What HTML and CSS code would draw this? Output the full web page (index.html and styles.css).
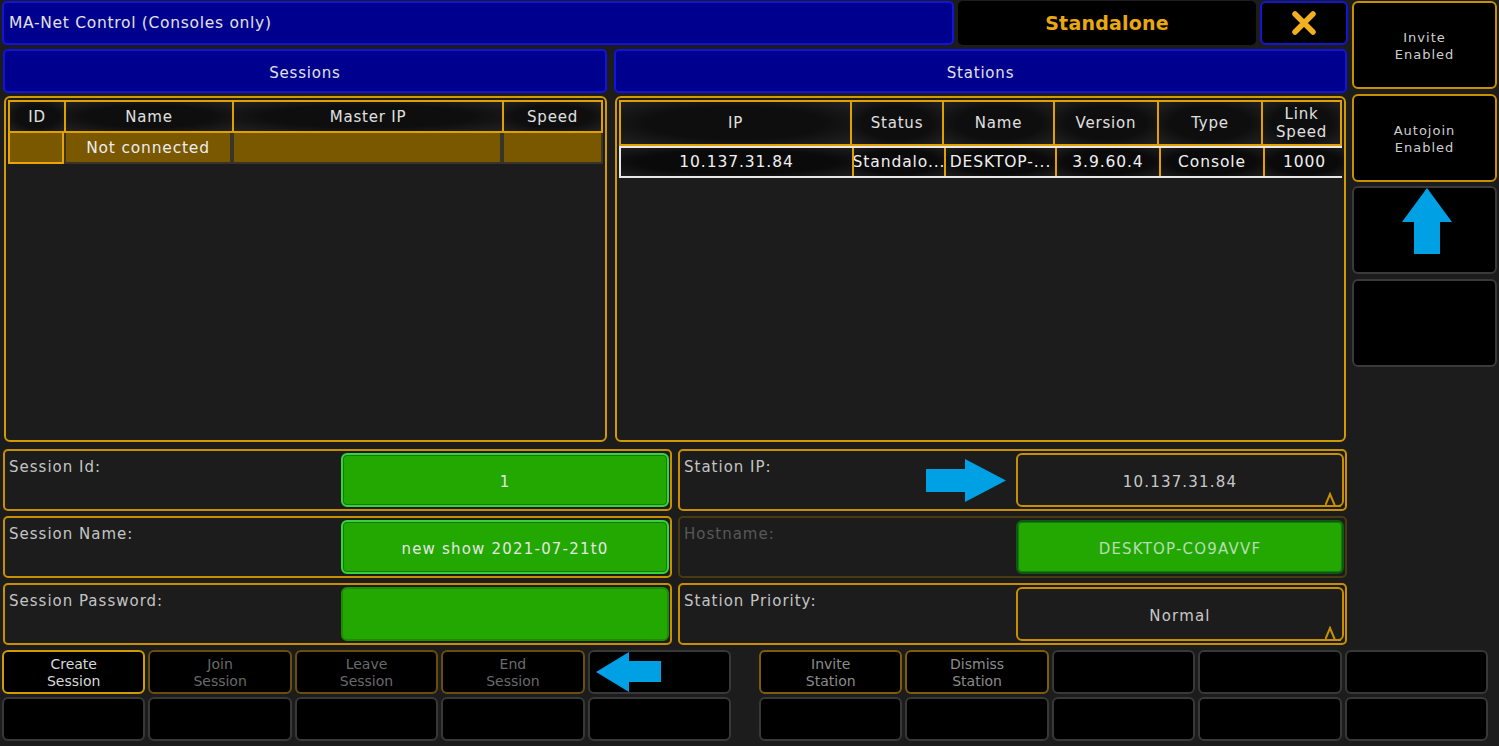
FILE: index.html
```html
<!DOCTYPE html>
<html>
<head>
<meta charset="utf-8">
<link rel="stylesheet" href="styles.css">
</head>
<body>
<div class="screen">
  <div class="upper">
    <div class="main">
      <div class="topbar">
        <div class="title">MA-Net Control (Consoles only)</div>
        <div class="mode">Standalone</div>
        <div class="close">
          <svg width="26" height="26" viewBox="0 0 26 26"><path d="M4 4 L22 22 M22 4 L4 22" stroke="#f0b020" stroke-width="5.5" stroke-linecap="round" fill="none"/></svg>
        </div>
      </div>
      <div class="heads">
        <div class="head head-sess">Sessions</div>
        <div class="head head-stat">Stations</div>
      </div>
      <div class="panels">
        <div class="panel panel-sess">
          <div class="thead sess-cols">
            <div class="th">ID</div>
            <div class="th">Name</div>
            <div class="th">Master IP</div>
            <div class="th">Speed</div>
          </div>
          <div class="srow sess-cols">
            <div class="sc sc-sel"></div>
            <div class="sc">Not connected</div>
            <div class="sc"></div>
            <div class="sc"></div>
          </div>
        </div>
        <div class="panel panel-stat">
          <div class="thead stat-cols thead-tall">
            <div class="th">IP</div>
            <div class="th">Status</div>
            <div class="th">Name</div>
            <div class="th">Version</div>
            <div class="th">Type</div>
            <div class="th">Link<br>Speed</div>
          </div>
          <div class="trow stat-cols">
            <div class="tc">10.137.31.84</div>
            <div class="tc">Standalo...</div>
            <div class="tc">DESKTOP-...</div>
            <div class="tc">3.9.60.4</div>
            <div class="tc">Console</div>
            <div class="tc">1000</div>
          </div>
        </div>
      </div>
      <div class="fields">
        <div class="field">
          <div class="label">Session Id:</div>
          <div class="input green">1</div>
        </div>
        <div class="field field-arrow">
          <div class="label">Station IP:</div>
          <svg class="arrow-right" width="80" height="43" viewBox="0 0 80 43"><polygon points="0,10 39,10 39,0 80,21.5 39,43 39,33 0,33" fill="#00a0e4"/></svg>
          <div class="input dark">10.137.31.84
            <svg class="caret" width="16" height="15" viewBox="0 0 16 15"><polyline points="0,14 5,2 10,14 16,14" stroke="#c89000" stroke-width="2" fill="none"/></svg>
          </div>
        </div>
        <div class="field">
          <div class="label">Session Name:</div>
          <div class="input green">new show 2021-07-21t0</div>
        </div>
        <div class="field field-dim">
          <div class="label label-dim">Hostname:</div>
          <div class="input green green-dim">DESKTOP-CO9AVVF</div>
        </div>
        <div class="field">
          <div class="label">Session Password:</div>
          <div class="input green green-flat"></div>
        </div>
        <div class="field">
          <div class="label">Station Priority:</div>
          <div class="input dark">Normal
            <svg class="caret" width="16" height="15" viewBox="0 0 16 15"><polyline points="0,14 5,2 10,14 16,14" stroke="#c89000" stroke-width="2" fill="none"/></svg>
          </div>
        </div>
      </div>
    </div>
    <div class="side">
      <div class="sbtn sbtn-on">Invite<br>Enabled</div>
      <div class="sbtn sbtn-on">Autojoin<br>Enabled</div>
      <div class="sbtn sbtn-arrow">
        <svg width="50" height="66" viewBox="0 0 50 66"><polygon points="25,0 50,34 38,34 38,66 12,66 12,34 0,34" fill="#00a0e4"/></svg>
      </div>
      <div class="sbtn"></div>
    </div>
  </div>
  <div class="bottom">
    <div class="bgrid">
      <div class="bbtn bbtn-on">Create<br>Session</div>
      <div class="bbtn bbtn-dim">Join<br>Session</div>
      <div class="bbtn bbtn-dim">Leave<br>Session</div>
      <div class="bbtn bbtn-dim">End<br>Session</div>
      <div class="bbtn bbtn-arrow">
        <svg width="65" height="40" viewBox="0 0 65 40"><polygon points="0,20 33,0 33,9 65,9 65,30 33,30 33,40" fill="#00a0e4"/></svg>
      </div>
      <div class="bbtn"></div>
      <div class="bbtn"></div>
      <div class="bbtn"></div>
      <div class="bbtn"></div>
      <div class="bbtn"></div>
    </div>
    <div class="bgrid">
      <div class="bbtn bbtn-mid">Invite<br>Station</div>
      <div class="bbtn bbtn-mid">Dismiss<br>Station</div>
      <div class="bbtn"></div>
      <div class="bbtn"></div>
      <div class="bbtn"></div>
      <div class="bbtn"></div>
      <div class="bbtn"></div>
      <div class="bbtn"></div>
      <div class="bbtn"></div>
      <div class="bbtn"></div>
    </div>
  </div>
</div>
</body>
</html>
```
FILE: styles.css
```css
* { box-sizing: border-box; }
html, body {
  margin: 0;
  padding: 0;
  background: #1c1c1c;
}
body {
  font-family: "DejaVu Sans", "Noto Sans", sans-serif;
  color: #d8d8d8;
  width: 1499px;
  height: 746px;
  overflow: hidden;
}
.screen {
  width: 1499px;
  height: 746px;
}
.upper {
  display: flex;
  height: 645px;
}
.main {
  width: 1350px;
}
.topbar {
  display: flex;
  gap: 4px;
  margin: 1px 0 0 2px;
  height: 44px;
}
.title {
  width: 952px;
  background: #00008e;
  border: 2px solid #1414d8;
  border-radius: 5px;
  padding: 0 5px;
  display: flex;
  align-items: center;
  font-size: 15.5px;
  letter-spacing: 0.7px;
  color: #e2e2e2;
  padding-bottom: 1px;
}
.mode {
  width: 298px;
  background: #000;
  border-radius: 5px;
  display: flex;
  align-items: center;
  justify-content: center;
  font-size: 19px;
  font-weight: bold;
  letter-spacing: 0.2px;
  color: #e8a810;
}
.close {
  width: 88px;
  background: #000;
  border: 2px solid #1414d8;
  border-radius: 6px;
  display: flex;
  align-items: center;
  justify-content: center;
}
.heads {
  display: flex;
  gap: 7px;
  margin: 4px 0 0 3px;
  height: 44px;
}
.head {
  background: #00008e;
  border: 2px solid #1414d8;
  border-radius: 5px;
  display: flex;
  align-items: center;
  justify-content: center;
  padding-top: 3px;
  font-size: 15px;
  letter-spacing: 0.8px;
  color: #e2e2e2;
}
.head-sess { width: 604px; }
.head-stat { width: 733px; }
.panels {
  display: flex;
  gap: 8px;
  margin: 3px 0 0 4px;
  height: 346px;
}
.panel {
  border: 2px solid #d09a00;
  border-radius: 6px;
  padding: 2px;
}
.panel-sess { width: 603px; }
.panel-stat { width: 731px; }
.sess-cols {
  display: grid;
  grid-template-columns: 56px 168px 270px 101px;
}
.stat-cols {
  display: grid;
  grid-template-columns: 231px 92px 111px 104px 104px 81px;
}
.thead {
  height: 33px;
  border-top: 2px solid #e0a000;
  border-bottom: 2px solid #e0a000;
}
.thead-tall { height: 46px; }
.th {
  display: flex;
  align-items: center;
  justify-content: center;
  text-align: center;
  font-size: 15px;
  line-height: 18px;
  letter-spacing: 0.8px;
  color: #e0e0e0;
  background: radial-gradient(ellipse at center, #0e0e0e 55%, #222 100%);
  border-left: 2px solid #e0a000;
}
.th:last-child { border-right: 2px solid #e0a000; }
.srow {
  height: 31px;
  background: #7a5800;
}
.sc {
  display: flex;
  align-items: center;
  justify-content: center;
  font-size: 15.5px;
  letter-spacing: 0.8px;
  color: #ececec;
  border: 2px solid #3a3428;
  border-top: none;
}
.sc-sel { border: 2px solid #e8a400; border-top: none; }
.trow {
  height: 32px;
  border: 2px solid #e8e8e8;
  box-shadow: inset 0 0 0 1px #777;
  background: #0a0a0a;
}
.tc {
  display: flex;
  align-items: center;
  justify-content: center;
  font-size: 15.5px;
  letter-spacing: 0.9px;
  color: #f0f0f0;
  white-space: nowrap;
  overflow: hidden;
  border-left: 2px solid #e0a000;
  background: radial-gradient(ellipse at center, #0a0a0a 60%, #1e1e1e 100%);
}
.tc:first-child { border-left: none; }
.fields {
  display: grid;
  grid-template-columns: 669px 669px;
  grid-template-rows: 62px 62px 62px;
  column-gap: 6px;
  row-gap: 5px;
  margin: 7px 0 0 3px;
}
.field {
  position: relative;
  border: 2px solid #c89000;
  border-radius: 5px;
  padding: 2px 1px 2px 4px;
  display: flex;
  justify-content: space-between;
}
.field-dim { border-color: #4a3a12; }
.label {
  font-size: 15px;
  letter-spacing: 1px;
  color: #c4c4c4;
  padding-top: 5px;
  line-height: 18px;
}
.label-dim { color: #585858; }
.input {
  position: relative;
  width: 328px;
  border-radius: 6px;
  display: flex;
  align-items: center;
  justify-content: center;
  padding-top: 3px;
  font-size: 15px;
  letter-spacing: 1.2px;
  color: #d8d8d8;
}
.green {
  background: #22a800;
  border: 2px solid #3ad23a;
  box-shadow: inset 0 0 0 1px #127a12;
  color: #e6e6e6;
}
.green-flat {
  border-color: #1c8c00;
  box-shadow: none;
}
.green-dim {
  border-color: #0d5a0d;
  box-shadow: inset 0 0 0 1px #167a16;
  color: #b8dcb8;
}
.dark {
  background: #1c1c1c;
  border: 2px solid #c89000;
  color: #c8c8c8;
}
.caret {
  position: absolute;
  right: 1px;
  bottom: -2px;
}
.arrow-right {
  position: absolute;
  left: 246px;
  top: 8px;
}
.side {
  width: 145px;
  margin-left: 2px;
  padding-top: 1px;
  display: flex;
  flex-direction: column;
  gap: 4.5px;
}
.sbtn {
  height: 88px;
  background: #000;
  border: 2px solid #3a3a3a;
  border-radius: 6px;
  display: flex;
  align-items: center;
  justify-content: center;
  text-align: center;
  padding-top: 2px;
  font-size: 13px;
  line-height: 17px;
  letter-spacing: 1px;
  color: #cfcfcf;
}
.sbtn-on { border-color: #c89000; }
.sbtn-arrow {
  align-items: flex-start;
  padding-top: 0;
  padding-left: 5px;
}
.bottom {
  display: flex;
  justify-content: space-between;
  margin: 5px 0 0 2px;
  width: 1486px;
}
.bgrid {
  width: 729px;
  display: grid;
  grid-template-columns: repeat(5, 1fr);
  grid-template-rows: 44px 44px;
  gap: 3px;
}
.bbtn {
  background: #000;
  border: 2px solid #383838;
  border-radius: 6px;
  display: flex;
  align-items: center;
  justify-content: center;
  text-align: center;
  padding-top: 2px;
  font-size: 14px;
  line-height: 17px;
  color: #d8d8d8;
}
.bbtn-on { border-color: #d09a00; }
.bbtn-dim { border-color: #6a4e10; color: #6a6a6a; }
.bbtn-mid { border-color: #7e5c0a; color: #8c8c8c; }
.bbtn-arrow {
  justify-content: flex-start;
  padding-top: 0;
  padding-left: 6px;
}
```
